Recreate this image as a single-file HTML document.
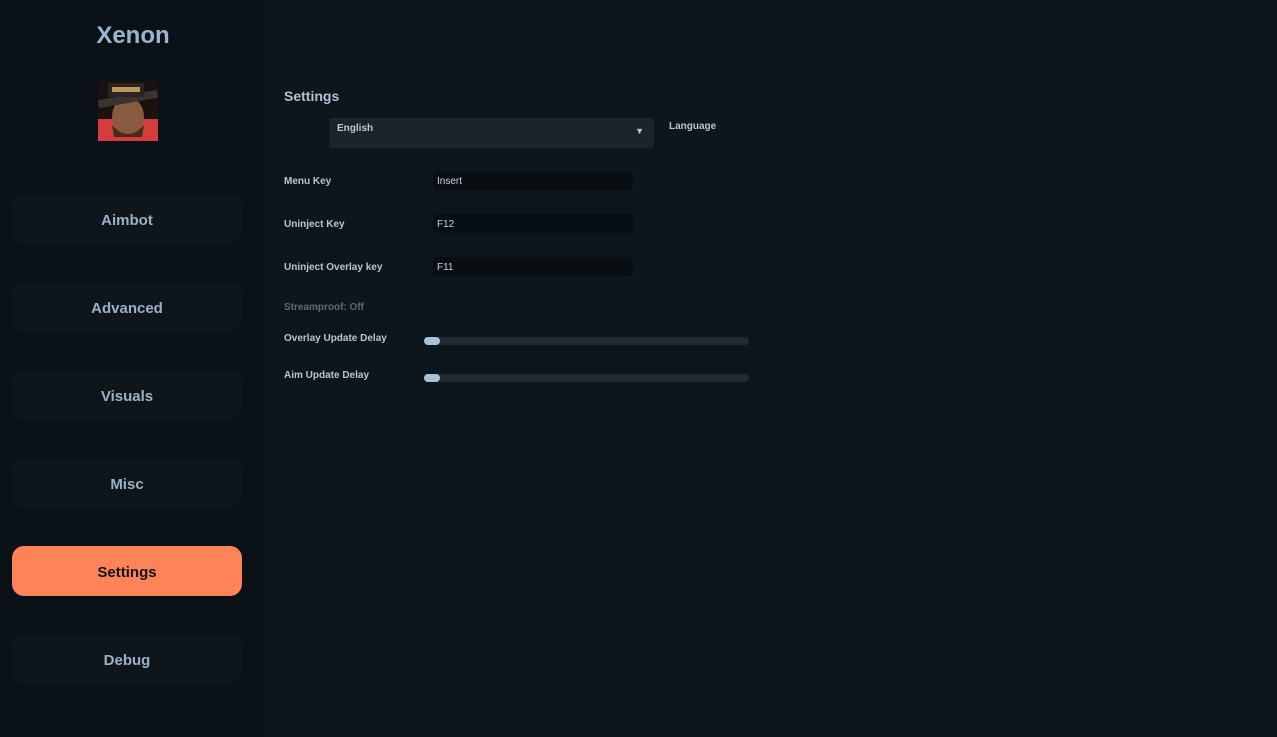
<!DOCTYPE html>
<html><head><meta charset="utf-8"><style>
*{margin:0;padding:0;box-sizing:border-box}
body{width:1277px;height:737px;background:#0e161d;font-family:"Liberation Sans",sans-serif;position:relative;overflow:hidden}
.side{position:absolute;left:0;top:0;width:264px;height:737px;background:#0a1117}
.title{position:absolute;left:0;width:266px;top:22px;text-align:center;color:#9ab6ce;font-size:24px;font-weight:bold}
.av{position:absolute;left:98px;top:81px;width:60px;height:60px}
.btn{position:absolute;left:12px;width:230px;height:50px;border-radius:12px;background:#0e151b;color:#9ab1c6;font-size:15px;font-weight:bold;text-align:center;line-height:54px}
.btn.on{background:#ff8358;color:#101418}
.t{position:absolute;color:#b5c6d6;font-size:10px;font-weight:bold}
.inp{position:absolute;left:433px;width:200px;height:19px;background:#090e13;border-radius:3px;color:#c8d4de;font-size:10px;padding-left:4px;line-height:21px}
.sl{position:absolute;left:424px;width:325px;height:8px;background:#1f2a33;border-radius:4px}
.sl i{position:absolute;left:0;top:0;width:16px;height:8px;border-radius:4px;background:#a8c2d8}
</style></head><body>
<div class="side"></div>
<div class="title">Xenon</div>
<svg class="av" viewBox="0 0 60 60"><rect width="60" height="60" fill="#1a1210"/><rect x="0" y="38" width="60" height="22" fill="#d63c3c"/><ellipse cx="30" cy="36" rx="16" ry="20" fill="#8a5a40"/><path d="M14 44 Q30 62 46 44 L44 56 L16 56Z" fill="#4a2a1c"/><rect x="0" y="14" width="60" height="8" fill="#3a3430" transform="rotate(-10 30 18)"/><rect x="10" y="2" width="36" height="14" fill="#2a2522"/><rect x="14" y="6" width="28" height="5" fill="#b89a5a"/></svg>
<div class="btn" style="top:194px">Aimbot</div>
<div class="btn" style="top:282px">Advanced</div>
<div class="btn" style="top:370px">Visuals</div>
<div class="btn" style="top:458px">Misc</div>
<div class="btn on" style="top:546px">Settings</div>
<div class="btn" style="top:634px">Debug</div>

<div class="t" style="left:284px;top:88px;font-size:14px;color:#aec2d4">Settings</div>
<div style="position:absolute;left:329px;top:118px;width:325px;height:30px;background:#1d232a;border-radius:3px;color:#b8c8d6;font-size:10px;font-weight:bold;padding:5px 8px">English<span style="position:absolute;right:10px;top:8px;font-size:9px">▼</span></div>
<div class="t" style="left:669px;top:121px">Language</div>
<div class="t" style="left:284px;top:176px">Menu Key</div><div class="inp" style="top:171px">Insert</div>
<div class="t" style="left:284px;top:219px">Uninject Key</div><div class="inp" style="top:214px">F12</div>
<div class="t" style="left:284px;top:262px">Uninject Overlay key</div><div class="inp" style="top:257px">F11</div>
<div class="t" style="left:284px;top:302px;color:#5d6a75">Streamproof: Off</div>
<div class="t" style="left:284px;top:333px">Overlay Update Delay</div><div class="sl" style="top:337px"><i></i></div>
<div class="t" style="left:284px;top:370px">Aim Update Delay</div><div class="sl" style="top:374px"><i></i></div>
</body></html>
